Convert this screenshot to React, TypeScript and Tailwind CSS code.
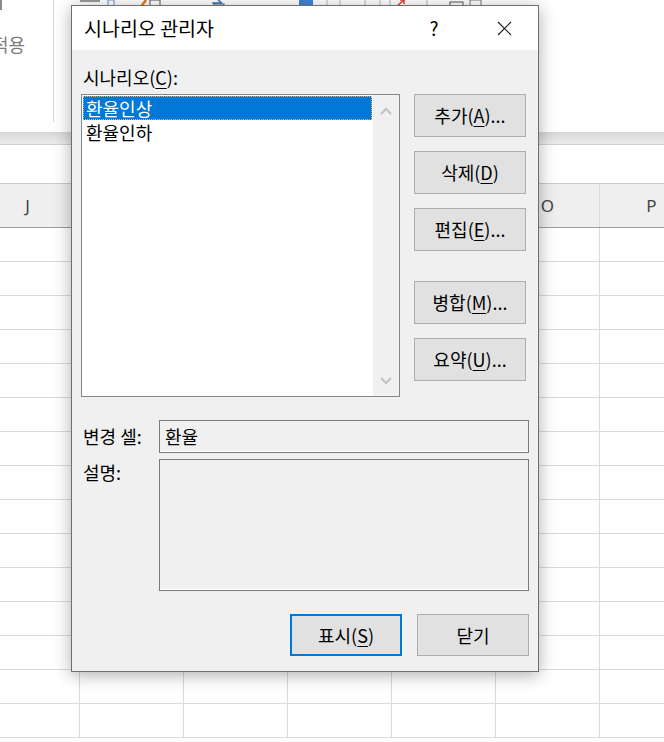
import React from "react";

const columns = ["J", "K", "L", "M", "N", "O", "P"];
const rows = Array.from({ length: 15 }, (_, i) => i);

// underlined access-key letter, e.g. (C)
function Key({ c }: { c: string }) {
  return <span className="underline decoration-1 underline-offset-[3px]">{c}</span>;
}

function Chevron({ up }: { up?: boolean }) {
  return (
    <svg width="12" height="8" viewBox="0 0 12 8" className="mx-auto">
      <path
        d={up ? "M1 7 L6 2 L11 7" : "M1 1 L6 6 L11 1"}
        fill="none"
        stroke="#c2c2c2"
        strokeWidth="2"
      />
    </svg>
  );
}

// clipped ribbon icons peeking out above the dialog
function RibbonStrip() {
  return (
    <svg width="664" height="10" className="absolute left-0 top-0">
      <rect x="0" y="0" width="2" height="12" fill="#8a8a8a" />
      <rect x="80" y="0" width="20" height="2" fill="#9a9a9a" />
      <rect x="108" y="0" width="6" height="6" fill="none" stroke="#6d8fb8" />
      <path d="M140 8 L146 0" stroke="#e07a1f" strokeWidth="2.5" />
      <rect x="150" y="0" width="10" height="6" fill="none" stroke="#555" />
      <path d="M212 3 H222 M218 0 L222 3" stroke="#2e75c8" strokeWidth="1.5" fill="none" />
      <rect x="214" y="4" width="10" height="3" fill="none" stroke="#555" />
      <rect x="299" y="0" width="14" height="5" fill="#3d86d6" />
      <path d="M327 0 V6 M340 0 V6 M365 0 V6 M380 0 V6 M390 0 V6 M427 0 V6" stroke="#b5b5b5" />
      <path d="M396 7 L404 0 M400 0 H404 V4" stroke="#e0403a" strokeWidth="1.5" fill="none" />
      <rect x="450" y="2" width="13" height="5" fill="none" stroke="#555" />
      <rect x="470" y="0" width="11" height="6" fill="none" stroke="#777" />
    </svg>
  );
}

function SideButton({ children, className = "" }: { children: React.ReactNode; className?: string }) {
  return (
    <div
      className={`flex h-[43px] items-center justify-center border border-[#adadad] bg-[#e1e1e1] text-[18px] ${className}`}
    >
      {children}
    </div>
  );
}

function ScenarioManager() {
  return (
    <div className="absolute left-[71px] top-[5px] flex h-[667px] w-[468px] flex-col border border-[#6f6f6f] bg-[#f0f0f0] text-black shadow-[0_3px_16px_rgba(0,0,0,0.32)]">
      <div className="flex h-[44px] items-center bg-white pl-[12px]">
        <span className="text-[19.5px]">시나리오 관리자</span>
        <div className="ml-auto flex items-center gap-[24px] pr-[11px]">
          <span className="w-[46px] text-center text-[19px]">?</span>
          <div className="flex w-[46px] justify-center">
            <svg width="15" height="15" viewBox="0 0 15 15">
              <path d="M1 1 L14 14 M14 1 L1 14" stroke="#222" strokeWidth="1.2" />
            </svg>
          </div>
        </div>
      </div>

      <div className="flex flex-1 flex-col px-[9px] text-[18px]">
        <div className="mt-[15px] flex h-[24px] items-center pl-[2px]">
          시나리오(<Key c="C" />):
        </div>

        <div className="mt-[5px] flex">
          <div className="flex h-[303px] w-[319px] border border-[#828790] bg-white">
            <div className="flex-1 p-px">
              <div className="flex h-[24px] items-center bg-[#0078d7] pl-[3px] text-white outline-1 -outline-offset-1 outline-dotted outline-[#f4b26a]">
                환율인상
              </div>
              <div className="flex h-[24px] items-center pl-[3px]">환율인하</div>
            </div>
            <div className="flex w-[26px] flex-col justify-between bg-[#f0f0f0] pb-[11px] pt-[12px]">
              <Chevron up />
              <Chevron />
            </div>
          </div>

          <div className="ml-[14px] flex w-[112px] flex-col">
            <SideButton>
              추가(<Key c="A" />)...
            </SideButton>
            <SideButton className="mt-[14px]">
              삭제(<Key c="D" />)
            </SideButton>
            <SideButton className="mt-[14px]">
              편집(<Key c="E" />)...
            </SideButton>
            <SideButton className="mt-[30px]">
              병합(<Key c="M" />)...
            </SideButton>
            <SideButton className="mt-[14px]">
              요약(<Key c="U" />)...
            </SideButton>
          </div>
        </div>

        <div className="mt-[23px] flex items-center">
          <span className="w-[78px] pl-[2px]">변경 셀:</span>
          <div className="flex h-[33px] flex-1 items-center border border-[#7a7a7a] pl-[5px] shadow-[inset_0_-1px_0_#fff]">
            환율
          </div>
        </div>

        <div className="mt-[6px] flex items-start">
          <span className="mt-px flex h-[24px] w-[78px] items-center pl-[2px]">설명:</span>
          <div className="h-[132px] flex-1 border border-[#7a7a7a] shadow-[inset_0_-1px_0_#fff]" />
        </div>

        <div className="mt-[23px] flex justify-end gap-[15px]">
          <div className="flex h-[42px] w-[112px] items-center justify-center border-2 border-[#0078d7] bg-[#e1e1e1]">
            표시(<Key c="S" />)
          </div>
          <div className="flex h-[42px] w-[112px] items-center justify-center border border-[#adadad] bg-[#e1e1e1]">
            닫기
          </div>
        </div>
      </div>
    </div>
  );
}

export default function App() {
  return (
    <div className="relative h-[742px] w-[664px] overflow-hidden bg-white font-['Noto_Sans_CJK_KR','Noto_Sans',sans-serif]">
      {/* ribbon */}
      <div className="relative h-[132px] bg-white">
        <RibbonStrip />
        <div className="h-[122px] w-[54px] overflow-hidden border-r border-[#d4d4d4]">
          <div className="-ml-[8px] mt-[31px] whitespace-nowrap text-[18px] text-[#7b7b7b]">적용</div>
        </div>
      </div>
      <div className="h-[12px] bg-gradient-to-b from-[#d6d6d6] to-[#ececec]" />

      {/* formula bar */}
      <div className="h-[39px] border-t border-[#d0d0d0] bg-white" />

      {/* column headers */}
      <div className="-ml-[24px] flex h-[45px] border-y border-b-[#9d9d9d] border-t-[#cacaca] bg-[#efefef]">
        {columns.map((c) => (
          <div
            key={c}
            className="flex w-[104px] shrink-0 items-center justify-center border-r border-[#dadada] font-['Noto_Sans',sans-serif] text-[17px] text-[#444]"
          >
            {c}
          </div>
        ))}
      </div>

      {/* cells */}
      {rows.map((r) => (
        <div key={r} className="-ml-[24px] flex h-[34px] border-b border-[#dadada]">
          {columns.map((c) => (
            <div key={c} className="w-[104px] shrink-0 border-r border-[#dadada]" />
          ))}
        </div>
      ))}

      <ScenarioManager />
    </div>
  );
}
